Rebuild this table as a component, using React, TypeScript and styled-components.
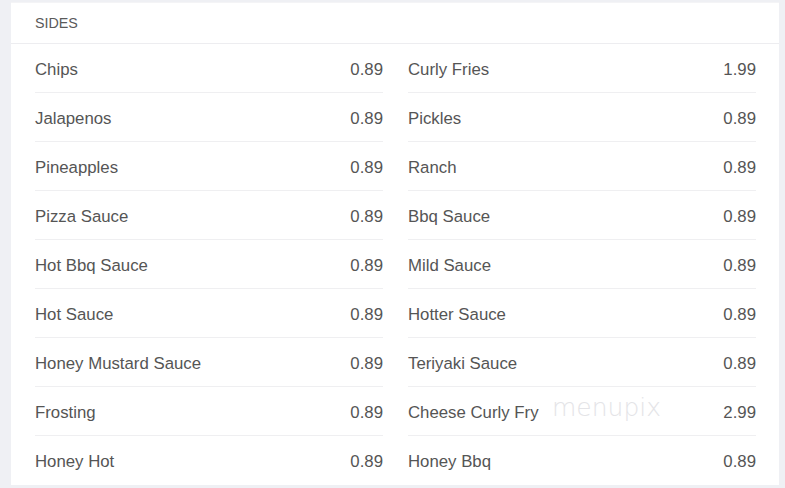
import React from "react";
import styled, { createGlobalStyle } from "styled-components";

const Global = createGlobalStyle`
  html, body { margin: 0; padding: 0; background: #eff0f4; }
  body { font-family: "Liberation Sans", Arial, sans-serif; }
`;

const Page = styled.div`
  width: 785px;
  height: 488px;
  box-sizing: border-box;
  padding: 2px 6px 3px 11px;
  background: #eff0f4;
`;

const Card = styled.section`
  position: relative;
  background: #fff;
  height: 483px;
  box-sizing: border-box;
  border-top: 1px solid #f4f4f6;
`;

const Header = styled.div`
  height: 41px;
  box-sizing: border-box;
  padding: 0 24px;
  display: flex;
  align-items: center;
  border-bottom: 1px solid #ededf0;
  font-size: 14.3px;
  color: #5a5a5a;
  text-transform: uppercase;
`;

const Columns = styled.div`
  display: grid;
  grid-template-columns: 348px 348px;
  column-gap: 25px;
  padding: 0 24px;
`;

const Column = styled.div`
  display: flex;
  flex-direction: column;
`;

const Row = styled.div<{ $last?: boolean }>`
  height: 49px;
  box-sizing: border-box;
  display: flex;
  align-items: center;
  justify-content: space-between;
  border-bottom: ${(p) => (p.$last ? "none" : "1px solid #efeff1")};
  font-size: 16.8px;
  color: #555;
  padding-top: 3px;
`;

const Name = styled.span``;
const Price = styled.span``;

const Watermark = styled.div`
  position: absolute;
  left: 541px;
  top: 390px;
  font-family: "DejaVu Sans", sans-serif;
  font-weight: 200;
  font-size: 25px;
  letter-spacing: 0;
  color: #e4e4e7;
  pointer-events: none;
`;

const left: [string, string][] = [
  ["Chips", "0.89"],
  ["Jalapenos", "0.89"],
  ["Pineapples", "0.89"],
  ["Pizza Sauce", "0.89"],
  ["Hot Bbq Sauce", "0.89"],
  ["Hot Sauce", "0.89"],
  ["Honey Mustard Sauce", "0.89"],
  ["Frosting", "0.89"],
  ["Honey Hot", "0.89"],
];

const right: [string, string][] = [
  ["Curly Fries", "1.99"],
  ["Pickles", "0.89"],
  ["Ranch", "0.89"],
  ["Bbq Sauce", "0.89"],
  ["Mild Sauce", "0.89"],
  ["Hotter Sauce", "0.89"],
  ["Teriyaki Sauce", "0.89"],
  ["Cheese Curly Fry", "2.99"],
  ["Honey Bbq", "0.89"],
];

function Col({ items }: { items: [string, string][] }) {
  return (
    <Column>
      {items.map(([n, p], i) => (
        <Row key={n} $last={i === items.length - 1}>
          <Name>{n}</Name>
          <Price>{p}</Price>
        </Row>
      ))}
    </Column>
  );
}

export default function App() {
  return (
    <Page>
      <Global />
      <Card>
        <Header>Sides</Header>
        <Columns>
          <Col items={left} />
          <Col items={right} />
        </Columns>
        <Watermark>menupix</Watermark>
      </Card>
    </Page>
  );
}
